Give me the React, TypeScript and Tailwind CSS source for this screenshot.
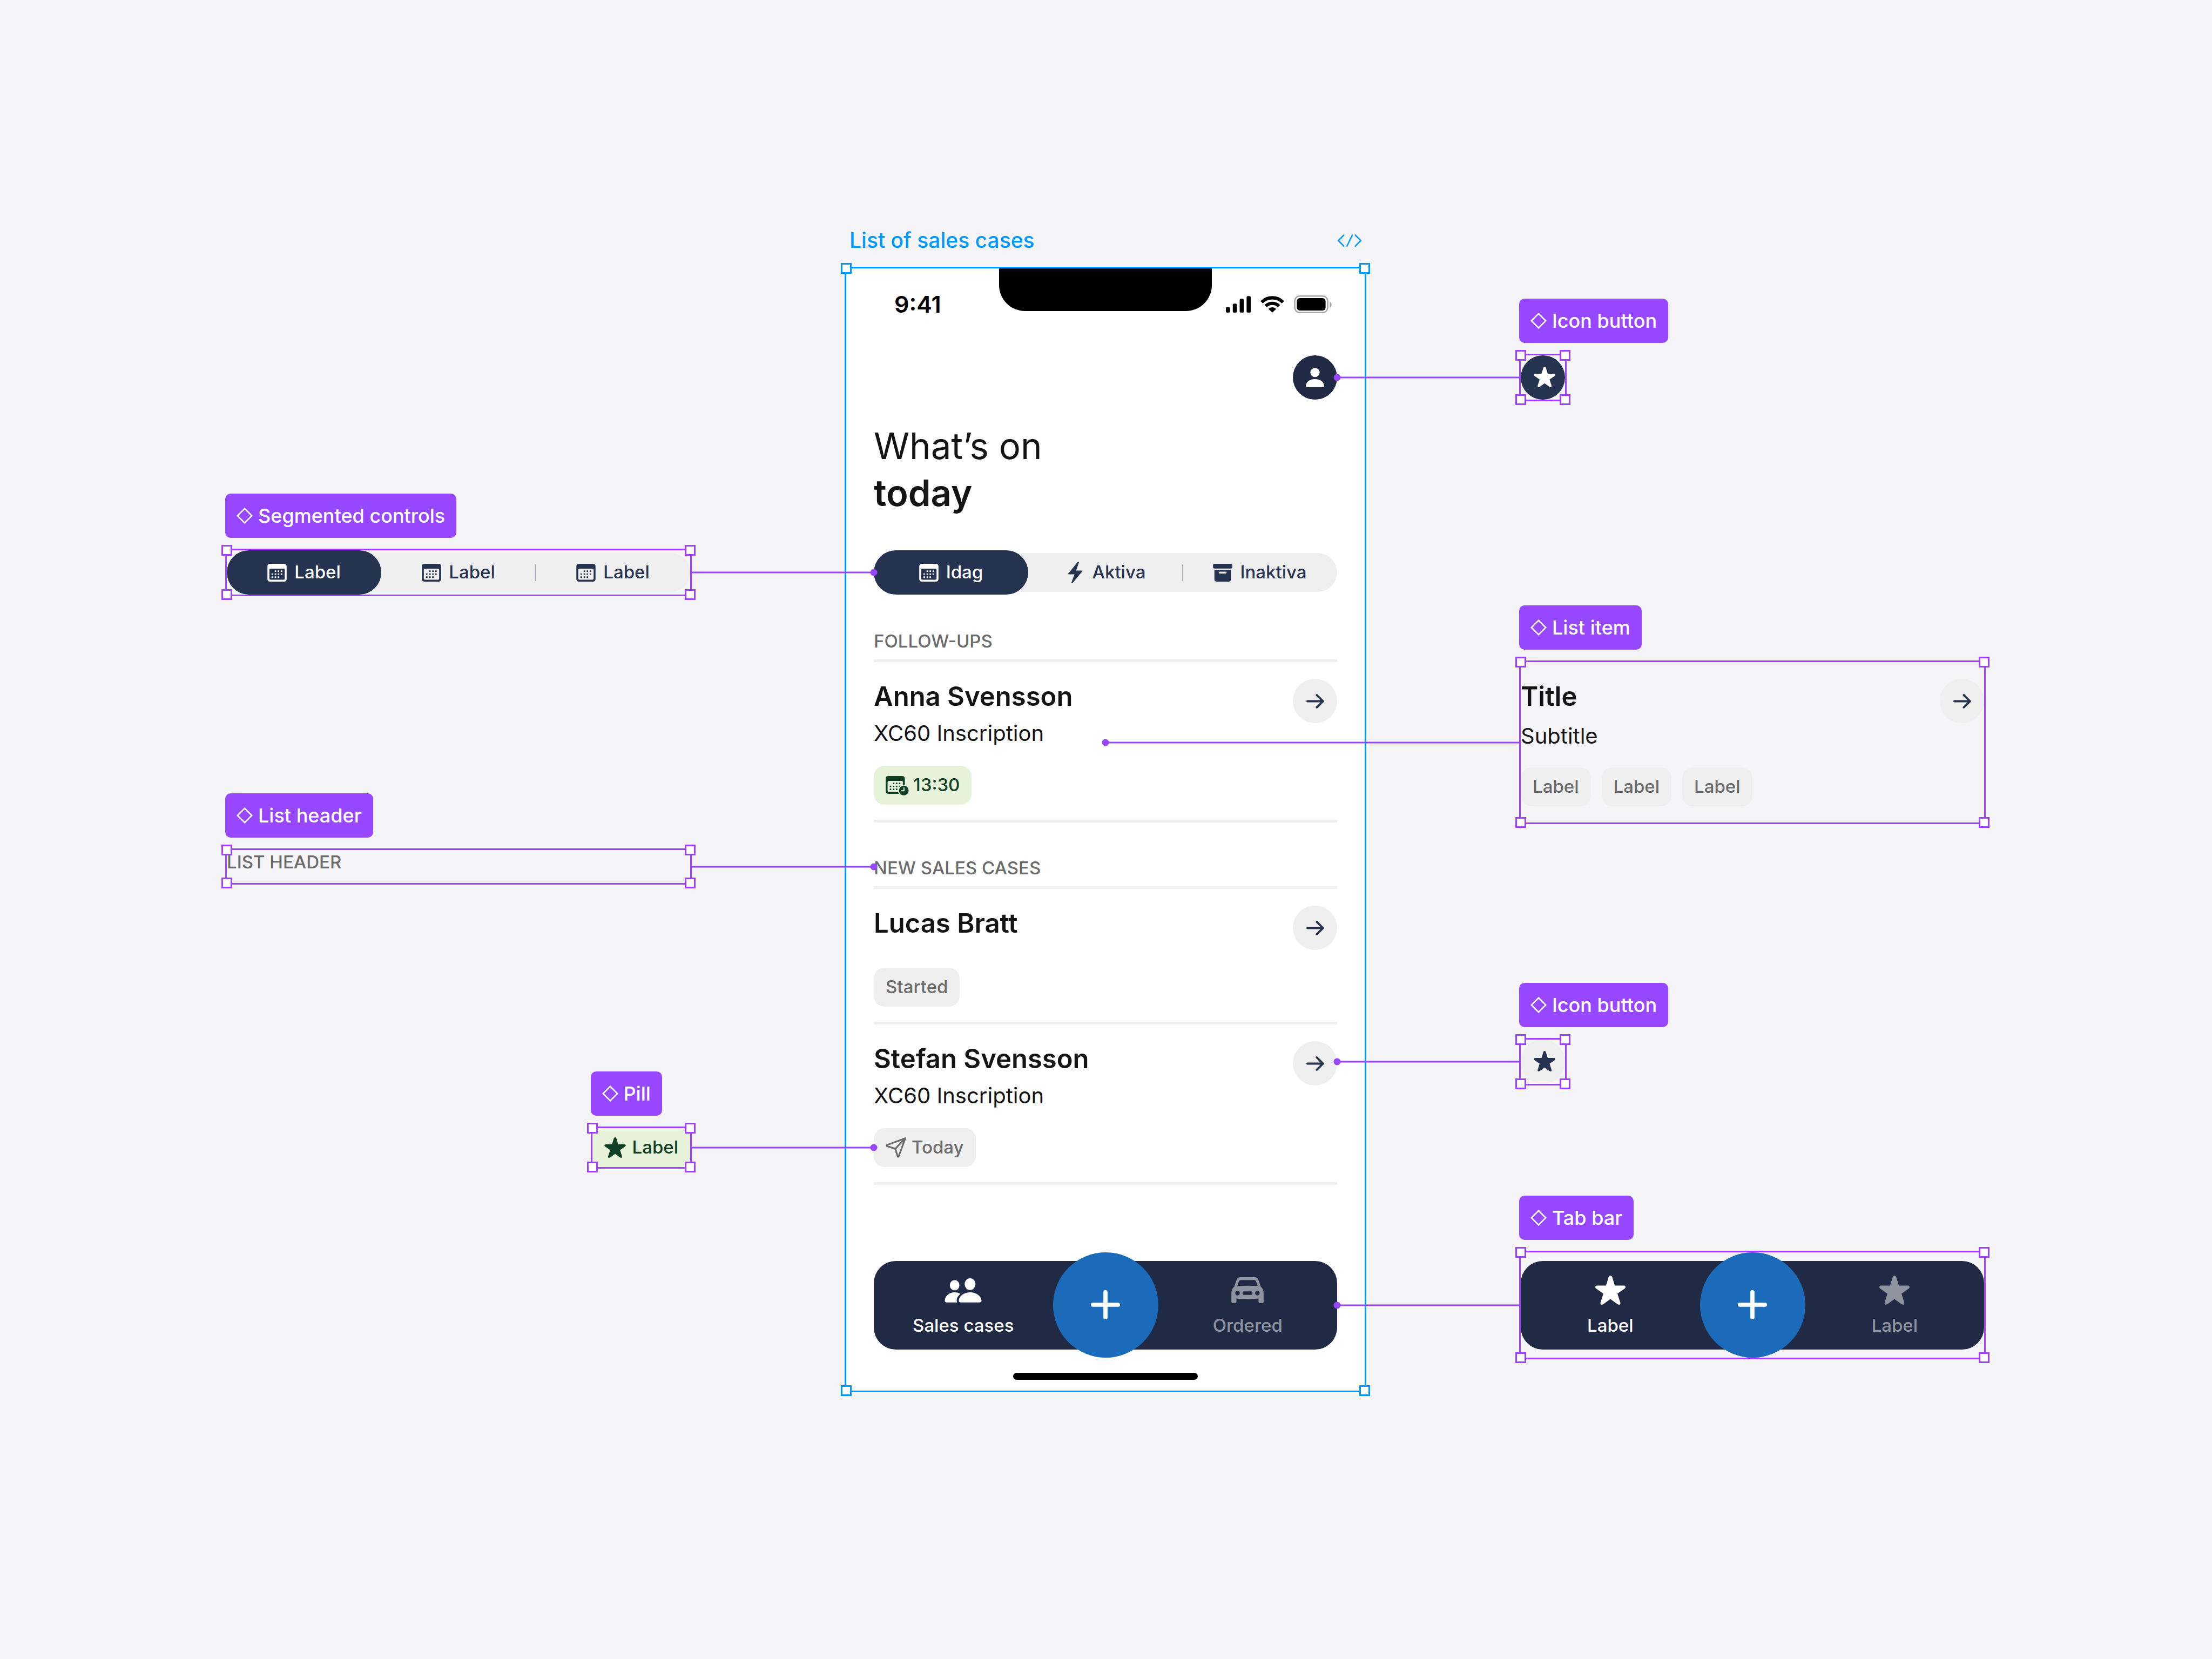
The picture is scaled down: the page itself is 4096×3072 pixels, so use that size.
import type { ReactNode } from "react";

const STAR =
  "M7.75 0Q8.45 0 8.7 .8L10 5.1H14.6Q15.5 5.2 15.5 5.9Q15.5 6.3 15 6.7L11.35 9.25L12.85 13.9Q12.95 14.9 12.2 14.9Q11.8 14.9 11.3 14.6L7.75 12L4.2 14.6Q3.7 14.9 3.3 14.9Q2.55 14.9 2.65 13.9L4.15 9.25L.5 6.7Q0 6.3 0 5.9Q0 5.2 .9 5.1H5.5L6.8 .8Q7.05 0 7.75 0Z";

const CALENDAR =
  "M2 0H12Q14 0 14 2V11Q14 13 12 13H2Q0 13 0 11V2Q0 0 2 0ZM2.2 3.5Q1.4 3.5 1.4 4.3V10.8Q1.4 11.6 2.2 11.6H11.8Q12.6 11.6 12.6 10.8V4.3Q12.6 3.5 11.8 3.5Z";

const CALENDAR_DOTS: [number, number][] = [
  [5.3, 4.8], [7.5, 4.8], [9.7, 4.8],
  [3, 7], [5.3, 7], [7.5, 7], [9.7, 7],
  [3, 9.2], [5.3, 9.2], [7.5, 9.2],
];

function CalendarShape() {
  return (
    <>
      <path fillRule="evenodd" d={CALENDAR} />
      {CALENDAR_DOTS.map(([x, y]) => (
        <rect key={`${x}-${y}`} x={x} y={y} width="1.1" height="1.1" rx=".2" />
      ))}
    </>
  );
}

function CalendarIcon() {
  return (
    <svg viewBox="0 0 14 13" className="h-[33px] w-9 shrink-0" fill="currentColor" aria-hidden="true">
      <CalendarShape />
    </svg>
  );
}

function CalendarClockIcon() {
  return (
    <svg viewBox="0 0 17 14.2" className="mt-0.5 h-9 w-[43px] shrink-0" fill="currentColor" aria-hidden="true">
      <CalendarShape />
      <circle cx="13.3" cy="10.6" r="4.3" fill="#e6f2d9" />
      <circle cx="13.3" cy="10.6" r="3.55" />
      <path d="M13.4 8.7V10.8H11.6" fill="none" stroke="#e6f2d9" strokeWidth=".8" strokeLinecap="round" strokeLinejoin="round" />
    </svg>
  );
}

function BoltIcon() {
  return (
    <svg viewBox="0 0 10.2 15.6" className="h-10 w-9 shrink-0" fill="currentColor" aria-hidden="true">
      <path d="M7 .2L.2 8.4Q-.2 9.2 .6 9.2H4.6L2.4 15Q2.5 15.8 3.2 15.4L10 7.2Q10.4 6.4 9.6 6.4H5.7L7.8 .6Q7.7-.2 7 .2Z" />
    </svg>
  );
}

function ArchiveIcon() {
  return (
    <svg viewBox="0 0 14 13" className="h-[33px] w-9 shrink-0" fill="currentColor" aria-hidden="true">
      <rect width="14" height="3.4" rx="1" />
      <path
        fillRule="evenodd"
        d="M1 4.4H13V11.2Q13 13 11.2 13H2.8Q1 13 1 11.2ZM4.8 5.7Q4.1 5.7 4.1 6.4Q4.1 7.1 4.8 7.1H9.2Q9.9 7.1 9.9 6.4Q9.9 5.7 9.2 5.7Z"
      />
    </svg>
  );
}

function StarIcon({ className }: { className: string }) {
  return (
    <svg viewBox="0 0 15.5 14.9" className={className} fill="currentColor" aria-hidden="true">
      <path d={STAR} />
    </svg>
  );
}

function CenteredStarIcon() {
  return (
    <svg viewBox="0 0 20 20" className="size-[51px]" fill="currentColor" aria-hidden="true">
      <path d={STAR} transform="translate(3.3 2)" />
    </svg>
  );
}

function PersonIcon() {
  return (
    <svg viewBox="0 0 13.2 14" className="h-9 w-[34px]" fill="currentColor" aria-hidden="true">
      <circle cx="6.6" cy="3.4" r="3.35" />
      <path d="M0 12.9C.3 10 3 8.2 6.6 8.2S12.9 10 13.2 12.9Q13.2 14 12.1 14H1.1Q0 14 0 12.9Z" />
    </svg>
  );
}

function PeopleIcon() {
  return (
    <svg viewBox="0 0 26.9 17.8" className="h-[45px] w-[69px]" fill="currentColor" aria-hidden="true">
      <ellipse cx="18.5" cy="4.3" rx="4" ry="4.3" />
      <path d="M10.2 16.2C10.4 13.4 13.8 10.3 18.5 10.3S26.7 13.4 26.9 16.2Q26.9 17.7 25.3 17.7H11.9Q10.2 17.7 10.2 16.2Z" />
      <ellipse cx="7.2" cy="5.1" rx="3.5" ry="3.8" />
      <path d="M0 16.2C.2 13.4 3 10.3 7.2 10.3C8.9 10.3 10.3 10.7 11.4 11.5C9.6 13 8.7 14.6 8.7 16.2Q8.75 17.2 9.1 17.7H1.5Q0 17.7 0 16.2Z" />
    </svg>
  );
}

function CarIcon() {
  return (
    <svg viewBox="0 0 23.4 18.8" className="h-12 w-[60px]" fill="currentColor" aria-hidden="true">
      <path
        fillRule="evenodd"
        d="M6.6 0H16.8Q18.9 0 19.6 2L21.3 6.8Q23.4 8.8 23.4 11.6V17.7Q23.4 18.7 22.4 18.7H20.7Q19.7 18.7 19.7 17.7V15.5Q11.7 16.3 3.7 15.5V17.7Q3.7 18.7 2.7 18.7H1Q0 18.7 0 17.7V11.6Q0 8.8 2.1 6.8L3.8 2Q4.5 0 6.6 0ZM7 2.1Q5.8 2.1 5.5 3L4.3 6.4Q11.7 5.9 19.1 6.4L17.9 3Q17.6 2.1 16.4 2.1ZM4.5 9.9A1.65 1.65 0 1 0 4.5 13.2A1.65 1.65 0 1 0 4.5 9.9ZM18.9 9.9A1.65 1.65 0 1 0 18.9 13.2A1.65 1.65 0 1 0 18.9 9.9ZM9 10.3Q8.6 10.3 8.4 10.7L8 11.5L8.4 12.4Q8.6 12.8 9 12.8H14.4Q14.8 12.8 15 12.4L15.4 11.5L15 10.7Q14.8 10.3 14.4 10.3Z"
      />
    </svg>
  );
}

function SendIcon() {
  return (
    <svg viewBox="0 0 14.7 14.6" className="size-[38px] shrink-0" fill="none" stroke="currentColor" strokeWidth="1.2" strokeLinejoin="round" strokeLinecap="round" aria-hidden="true">
      <path d="M14.1.6L1 5.4Q.4 5.8 1 6.2L6.9 8.2L8.6 13.6Q8.9 14.3 9.3 13.6ZM14.1.6L6.9 8.2" />
    </svg>
  );
}

function ArrowIcon() {
  return (
    <svg viewBox="0 0 12.9 10.6" className="h-[27px] w-[33px]" fill="none" stroke="currentColor" strokeWidth="1.5" strokeLinecap="round" strokeLinejoin="round" aria-hidden="true">
      <path d="M.75 5.3H12.1M7.6.8L12.1 5.3L7.6 9.8" />
    </svg>
  );
}

function PlusIcon() {
  return (
    <svg viewBox="0 0 21 21" className="size-[54px]" fill="none" stroke="currentColor" strokeWidth="3" strokeLinecap="round" aria-hidden="true">
      <path d="M10.5 1.5V19.5M1.5 10.5H19.5" />
    </svg>
  );
}

function StatusIcons() {
  return (
    <div className="flex items-center gap-[18px]">
      <svg viewBox="0 0 18 12" className="h-[31px] w-[46px]" aria-hidden="true">
        <rect x="0" y="8" width="3" height="4" rx="1" />
        <rect x="5" y="5.5" width="3" height="6.5" rx="1" />
        <rect x="10" y="2" width="3" height="10" rx="1" />
        <rect x="15" y="0" width="3" height="12" rx="1" />
      </svg>
      <svg viewBox="0 0 17.2 12" className="h-[31px] w-11" aria-hidden="true">
        <g fill="none" stroke="#000">
          <path d="M.9 4.5A10.8 10.8 0 0 1 16.3 4.5" strokeWidth="2.4" />
          <path d="M3.8 7.3A6.8 6.8 0 0 1 13.4 7.3" strokeWidth="2.4" />
        </g>
        <path d="M5.8 9.3A4 4 0 0 1 11.4 9.3L8.6 12Z" />
      </svg>
      <svg viewBox="0 0 27.4 13" className="h-[33px] w-[70px]" aria-hidden="true">
        <rect x=".5" y=".5" width="24" height="12" rx="3.6" fill="none" stroke="#a6a6a6" />
        <rect x="2" y="2" width="21" height="9" rx="2.2" />
        <path d="M26 4.6Q27.4 5.3 27.4 6.8T26 9Z" fill="#a6a6a6" />
      </svg>
    </div>
  );
}

const HANDLE_POSITIONS = [
  "-left-2.5 -top-2.5",
  "-right-2.5 -top-2.5",
  "-left-2.5 -bottom-2.5",
  "-right-2.5 -bottom-2.5",
];

function Handles({ color }: { color: string }) {
  return (
    <>
      {HANDLE_POSITIONS.map((position) => (
        <span key={position} className={`absolute size-5 border-[3px] bg-white ${position} ${color}`} />
      ))}
    </>
  );
}

type ConnectorKind = "right" | "left" | "left-long";

const CONNECTORS: Record<ConnectorKind, string> = {
  right: "left-full w-[340px] justify-end",
  left: "right-full w-[340px] justify-start",
  "left-long": "right-full w-[769px] justify-start",
};

const CONNECTOR_DOTS: Record<ConnectorKind, string> = {
  right: "translate-x-1/2",
  left: "-translate-x-1/2",
  "left-long": "-translate-x-1/2",
};

function Connector({ kind }: { kind: ConnectorKind }) {
  return (
    <span className={`absolute top-1/2 flex h-[3px] -translate-y-1/2 items-center bg-[#9747ff] ${CONNECTORS[kind]}`}>
      <span className={`size-[13px] shrink-0 rounded-full bg-[#9747ff] ${CONNECTOR_DOTS[kind]}`} />
    </span>
  );
}

function Annotation({
  name,
  connector,
  className,
  children,
}: {
  name: string;
  connector: ConnectorKind;
  className: string;
  children: ReactNode;
}) {
  return (
    <section className={`relative z-10 flex flex-col items-start gap-[23px] ${className}`}>
      <h2 className="-ml-[3px] flex h-[82px] items-center gap-2.5 rounded-[10px] bg-[#9747ff] px-[21px] text-[36px] font-medium text-white">
        <svg viewBox="0 0 12 12" className="size-[30px]" fill="none" stroke="currentColor" aria-hidden="true">
          <path d="M6 .7L11.3 6L6 11.3L.7 6Z" />
        </svg>
        {name}
      </h2>
      <div className="relative w-full outline-[3px] outline-[#a040ff] outline-solid">
        {children}
        <Connector kind={connector} />
        <Handles color="border-[#a040ff]" />
      </div>
    </section>
  );
}

type Segment = { label: string; icon: ReactNode };

function SegmentedControl({ segments }: { segments: Segment[] }) {
  return (
    <div className="relative grid h-[82px] grid-cols-3 items-stretch" role="group" aria-label="Filter">
      <div className="absolute inset-x-0 inset-y-[5px] rounded-full bg-[#efefef]" />
      {segments.map((segment, index) => (
        <button
          key={index}
          type="button"
          aria-pressed={index === 0}
          className={`relative flex items-center justify-center gap-3.5 rounded-full text-[33px] font-medium ${
            index === 0 ? "bg-[#253250] text-white" : "text-[#253250]"
          }`}
        >
          {segment.icon}
          {segment.label}
          {index === 1 && <span className="absolute right-0 h-[31px] w-px bg-[#a8adb9]" />}
        </button>
      ))}
    </div>
  );
}

function ListHeader({ children }: { children: ReactNode }) {
  return (
    <h3 className="border-b-[5px] border-[#efefef] pb-3 text-[33px] leading-[44px] font-medium text-[#6b6b6b] uppercase">
      {children}
    </h3>
  );
}

function Pill({ green = false, children }: { green?: boolean; children: ReactNode }) {
  return (
    <span
      className={`inline-flex h-[72px] items-center rounded-[20px] px-[22px] text-[33px] font-medium ${
        green ? "bg-[#e6f2d9] text-[#0f4026]" : "bg-[#efefef] text-[#6b6b6b]"
      }`}
    >
      {children}
    </span>
  );
}

function ArrowButton({ label }: { label: string }) {
  return (
    <button
      type="button"
      aria-label={label}
      className="flex size-[82px] shrink-0 items-center justify-center rounded-full bg-[#efefef] text-[#253250]"
    >
      <ArrowIcon />
    </button>
  );
}

function ListItem({ title, subtitle, pills }: { title: string; subtitle?: string; pills: ReactNode }) {
  return (
    <li className="border-b-[5px] border-[#efefef] pt-[31px] pb-7">
      <div className="flex items-start justify-between">
        <div>
          <h4 className="mb-3 text-[49px] leading-[66px] font-semibold">{title}</h4>
          {subtitle && <p className="text-[40px] leading-[46px]">{subtitle}</p>}
        </div>
        <ArrowButton label={`Open ${title}`} />
      </div>
      <div className={`flex gap-5 ${subtitle ? "mt-[37px]" : "mt-[33px]"}`}>{pills}</div>
    </li>
  );
}

function Tab({ label, active = false, icon }: { label: string; active?: boolean; icon: ReactNode }) {
  return (
    <button
      type="button"
      className={`flex flex-1 flex-col items-center gap-[11px] pt-6 pb-[22px] text-[33px] leading-[46px] font-medium ${
        active ? "text-white" : "text-[#8e94a0]"
      }`}
    >
      <span className="flex h-[61px] items-center">{icon}</span>
      {label}
    </button>
  );
}

function TabBar({ left, right }: { left: ReactNode; right: ReactNode }) {
  return (
    <nav className="flex h-[195px] items-center">
      <div className="flex flex-1 rounded-[41px] bg-[#202a44]">
        {left}
        <button
          type="button"
          aria-label="Add"
          className="-my-4 flex size-[195px] shrink-0 items-center justify-center rounded-full bg-[#1c6bba] text-white"
        >
          <PlusIcon />
        </button>
        {right}
      </div>
    </nav>
  );
}

function Phone() {
  return (
    <div className="relative bg-white text-[#141414] outline-[3px] outline-[#0099ff] outline-solid">
      <div className="absolute top-0 left-1/2 h-[79px] w-[394px] -translate-x-1/2 rounded-b-[48px] bg-black" />
      <div className="flex h-[113px] items-center justify-between pt-[19px] pr-[61px] pl-[89px] text-black">
        <span className="text-[43px] font-semibold">9:41</span>
        <StatusIcons />
      </div>

      <div className="px-[51px]">
        <div className="flex justify-end pt-12">
          <button
            type="button"
            aria-label="Profile"
            className="flex size-[82px] items-center justify-center rounded-full bg-[#202a44] text-white"
          >
            <PersonIcon />
          </button>
        </div>

        <h1 className="mt-[42px] mb-[63px] text-[67px] leading-[87px] font-normal">
          What’s on
          <br />
          <strong className="font-semibold">today</strong>
        </h1>

        <SegmentedControl
          segments={[
            { label: "Idag", icon: <CalendarIcon /> },
            { label: "Aktiva", icon: <BoltIcon /> },
            { label: "Inaktiva", icon: <ArchiveIcon /> },
          ]}
        />

        <div className="mt-16">
          <ListHeader>Follow-ups</ListHeader>
          <ul>
            <ListItem
              title="Anna Svensson"
              subtitle="XC60 Inscription"
              pills={
                <Pill green>
                  <CalendarClockIcon />
                  <span className="ml-2">13:30</span>
                </Pill>
              }
            />
          </ul>
        </div>

        <div className="mt-[62px]">
          <ListHeader>New sales cases</ListHeader>
          <ul>
            <ListItem title="Lucas Bratt" pills={<Pill>Started</Pill>} />
            <ListItem
              title="Stefan Svensson"
              subtitle="XC60 Inscription"
              pills={
                <Pill>
                  <SendIcon />
                  <span className="ml-2.5">Today</span>
                </Pill>
              }
            />
          </ul>
        </div>

        <div className="mt-[125px]">
          <TabBar
            left={<Tab active label="Sales cases" icon={<PeopleIcon />} />}
            right={<Tab label="Ordered" icon={<CarIcon />} />}
          />
        </div>
      </div>

      <div className="flex justify-center pt-7 pb-5">
        <div className="h-[13px] w-[342px] rounded-full bg-black" />
      </div>
      <Handles color="border-[#0099ff]" />
    </div>
  );
}

const calendarSegments: Segment[] = [0, 1, 2].map(() => ({ label: "Label", icon: <CalendarIcon /> }));

export default function App() {
  return (
    <main className="grid min-h-screen grid-cols-[minmax(0,858px)_minmax(0,960px)_minmax(0,858px)] items-start justify-center gap-x-[289px] bg-[#f5f5f8] pt-[420px] pr-0.5 font-[Inter,sans-serif]">
      <div className="flex flex-col pt-[494px]">
        <Annotation name="Segmented controls" connector="right" className="mb-[368px]">
          <SegmentedControl segments={calendarSegments} />
        </Annotation>

        <Annotation name="List header" connector="right" className="mb-[349px]">
          <ListHeader>List header</ListHeader>
        </Annotation>

        <Annotation name="Pill" connector="right" className="self-end">
          <div className="flex">
            <Pill green>
              <StarIcon className="h-[38px] w-10" />
              <span className="ml-3">Label</span>
            </Pill>
          </div>
        </Annotation>
      </div>

      <div>
        <div className="mb-[27px] flex items-center justify-between px-1.5 text-[39px] leading-[50px] font-medium text-[#0099ff]">
          <h2>List of sales cases</h2>
          <svg viewBox="0 0 17.2 9" className="h-[23px] w-11" fill="none" stroke="currentColor" strokeLinecap="round" strokeLinejoin="round" aria-hidden="true">
            <path d="M4.4.5L.5 4.5L4.4 8.5M12.8.5L16.7 4.5L12.8 8.5M10.6.5L6.7 8.5" />
          </svg>
        </div>
        <Phone />
      </div>

      <div className="flex flex-col items-start pt-[133px]">
        <Annotation name="Icon button" connector="left" className="mb-[381px] w-[82px] whitespace-nowrap">
          <button
            type="button"
            aria-label="Favourite"
            className="flex size-[82px] items-center justify-center rounded-full bg-[#253250] text-white"
          >
            <CenteredStarIcon />
          </button>
        </Annotation>

        <Annotation name="List item" connector="left-long" className="mb-[297px] w-full">
          <div className="border-y-[5px] border-[#efefef] pt-[26px] pb-[25px]">
            <div className="flex items-start justify-between">
              <div>
                <h4 className="mb-[17px] text-[49px] leading-[66px] font-semibold text-[#141414]">Title</h4>
                <p className="text-[40px] leading-[46px] text-[#141414]">Subtitle</p>
              </div>
              <ArrowButton label="Open item" />
            </div>
            <div className="mt-[35px] flex gap-5">
              <Pill>Label</Pill>
              <Pill>Label</Pill>
              <Pill>Label</Pill>
            </div>
          </div>
        </Annotation>

        <Annotation name="Icon button" connector="left" className="mb-[207px] w-[82px] whitespace-nowrap">
          <button
            type="button"
            aria-label="Favourite"
            className="flex size-[82px] items-center justify-center rounded-full bg-[#efefef] text-[#253250]"
          >
            <CenteredStarIcon />
          </button>
        </Annotation>

        <Annotation name="Tab bar" connector="left" className="w-full">
          <TabBar
            left={<Tab active label="Label" icon={<StarIcon className="h-[54px] w-14" />} />}
            right={<Tab label="Label" icon={<StarIcon className="h-[54px] w-14" />} />}
          />
        </Annotation>
      </div>
    </main>
  );
}
